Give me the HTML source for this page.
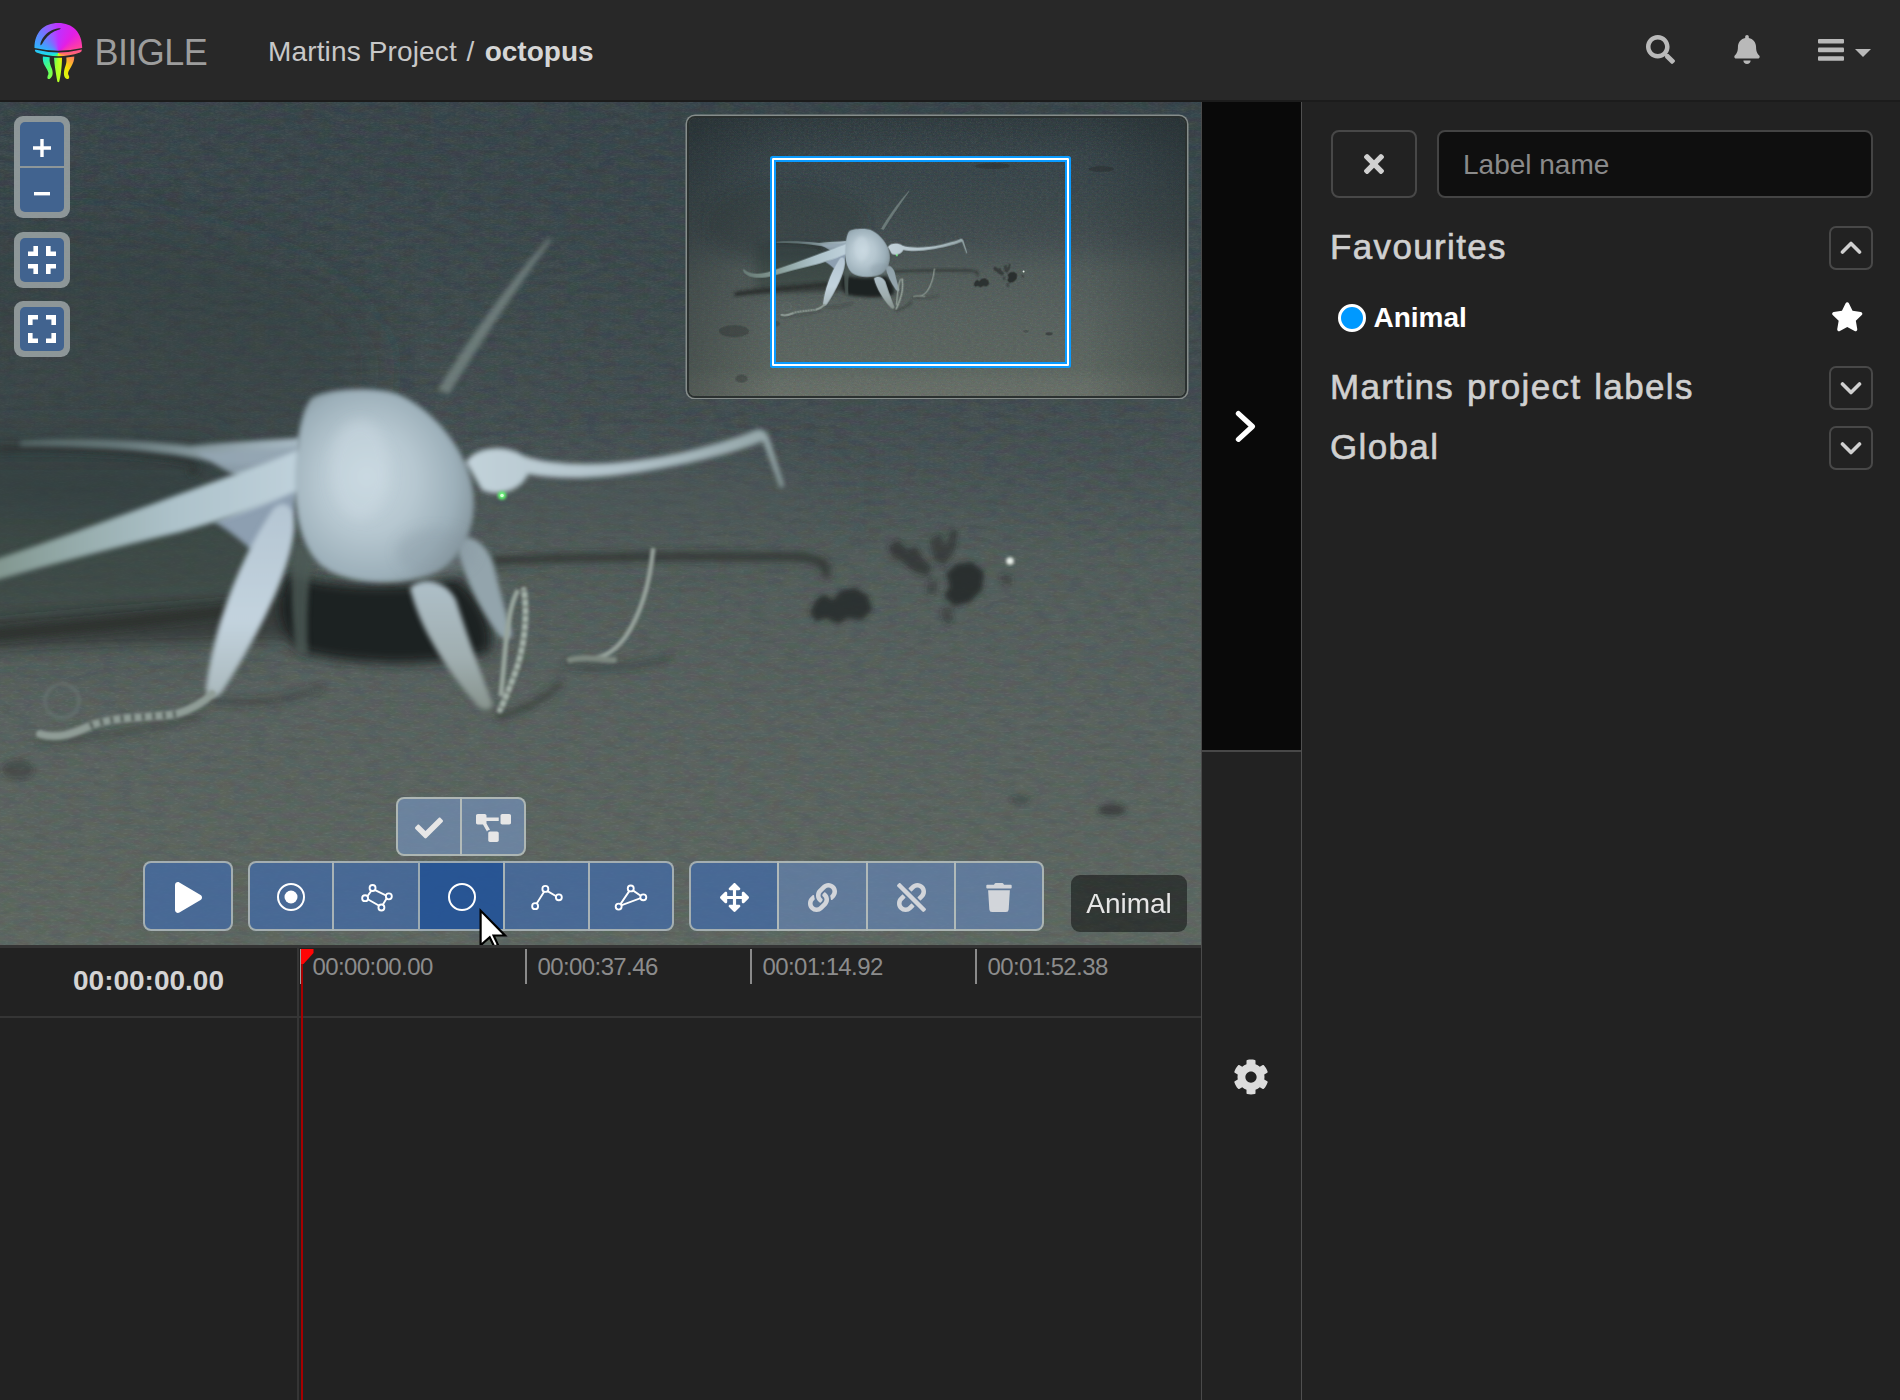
<!DOCTYPE html>
<html lang="en">
<head>
<meta charset="utf-8">
<title>octopus - BIIGLE</title>
<style>
*{box-sizing:border-box}
html,body{margin:0;padding:0}
body{width:1900px;height:1400px;overflow:hidden;background:#222;font-family:"Liberation Sans",Arial,sans-serif;color:#ccc;position:relative}
.abs{position:absolute}
#nav{left:0;top:0;width:1900px;height:102px;background:#282828;border-bottom:2px solid #1c1c1c}
#brand{left:94.500px;top:31px;font-size:36px;line-height:44px;color:#9d9d9d;letter-spacing:-.55px}
#crumb{left:268px;top:32px;font-size:28px;line-height:40px;color:#c8c8c8;white-space:nowrap}
#crumb b{font-weight:bold;color:#d6d6d6}
#video{left:0;top:102px;width:1202px;height:843px;overflow:hidden;background:#555f5c}
#timeline{left:0;top:945px;width:1202px;height:455px;background:#222;border-top:3px solid #343434;overflow:hidden}
#tabs{left:1201px;top:102px;width:101px;height:1298px;background:#222;border-left:1px solid #4a4a4a;border-right:1px solid #505050}
#tab1{left:0;top:0;width:99px;height:650px;background:#090909;border-bottom:2px solid #484848}
#side{left:1302px;top:102px;width:598px;height:1298px;background:#222}

#logo{left:34px;top:22px;width:50px;height:64px}
#logo .grad{position:absolute;left:0;top:0;width:50px;height:64px;background:conic-gradient(from 0deg at 24.300px 31px,#c030ff 0deg,#e41ee4 40deg,#ff40a0 75deg,#ff7068 98deg,#ffa838 125deg,#f4e400 152deg,#c4ff20 170deg,#a8ff28 186deg,#50ff70 212deg,#20ecc8 248deg,#20d4f0 268deg,#38a8ff 290deg,#7078ff 322deg,#a450ff 345deg,#c030ff 360deg);clip-path:path("M0.500 26 C0.500 10 10 0.900 24.300 0.900 C38.500 0.900 48.200 10 48.200 26 Q24.300 31.400 0.500 26Z M0.800 27.600 Q24.300 33.400 47.800 27.600 Q48.200 29.500 46 30.500 Q24.300 38 2.500 30.500 Q0.500 29.500 0.800 27.300Z M8.900 34.600 L15.700 35.200 C15 40 16.500 43 18 47 C19.500 52 18.500 55 15.500 57 C13 57.500 13 55 14.300 52.500 C15 50 13 47.500 11 44 C9 41 8.600 38 8.900 34.600Z M20 35.800 L28 35.800 C28 45 26.500 55 25.300 59.500 Q24.300 61 23.300 59.500 C22 52 20.500 44 20 35.800Z M32.300 35.500 L40.300 34.600 C40.300 38 39.500 41 37 45 C34.500 49 33.500 51 34.500 53 C36 55.500 35 57.500 33 57 C30 56 29.300 52 30.500 47 C31.500 43.500 33 41 32.300 35.500Z")}

.olc{position:absolute;background:rgba(160,168,170,.82);border-radius:9px;padding:6px}
.olc .b{display:block;width:44px;height:44px;background:#41638f;position:relative}
.olc .b svg{position:absolute}
#mini{left:686.500px;top:14px;width:500.500px;height:281.500px;border-radius:8px;border:2px solid #2b3130;overflow:hidden;background:#5a625a;box-shadow:0 0 0 1.500px #868d8b}
#ext{left:770.200px;top:54.100px;width:300.800px;height:212.100px;border:2.200px solid #0a9bff;border-radius:2.500px}
#ext i{position:absolute;left:0;top:0;right:0;bottom:0;border:2.300px solid #fff;border-radius:1px}
#ext b{position:absolute;left:0;top:0;right:0;bottom:0;border:2.200px solid #0a9bff}
.btn{position:absolute;height:70px;top:759px;border:2px solid rgba(200,202,188,.72);background:rgba(68,106,162,.8)}
.btn svg{position:absolute;left:50%;top:calc(50% + 1px)}
.btn.dis{background:rgba(98,130,176,.72)}
.btn.dis svg{opacity:.85}
.btn.act{background:rgba(36,84,152,.92)}
.btn.sm{height:59px;top:695px;background:rgba(114,142,180,.74)}
#lbl{left:1071px;top:773px;width:116px;height:57px;border-radius:9px;background:rgba(6,8,7,.5);color:#e6e6e6;font-size:28px;line-height:57px;text-align:center}

#tl-left{left:0;top:0;width:299px;height:452px;border-right:2px solid #353535}
#tl-head{left:0;top:0;width:1202px;height:70px;border-bottom:2px solid #353535}
#tl-time{left:0;top:13px;width:297px;text-align:center;font-size:28px;line-height:40px;font-weight:bold;color:#d4d4d4}
.tick{position:absolute;top:1px;height:35px;border-left:2px solid #8a8a8a;padding-left:10.500px;padding-top:6px;font-size:24px;letter-spacing:-.6px;line-height:24px;color:#8c8c8c;white-space:nowrap}
#cur{left:301px;top:2px;width:2px;height:452px;background:#a60000}
#flag{left:301px;top:1px;width:12.500px;height:15px;background:#ff0606;clip-path:polygon(0 0,100% 0,100% 4px,2.500px 100%,0 100%)}
#side h4{position:absolute;left:28px;margin:0;font-size:35px;line-height:40px;font-weight:normal;color:#d0d0d0;white-space:nowrap;letter-spacing:1.350px;-webkit-text-stroke:.6px #d0d0d0;word-spacing:1.700px}
.xbtn{position:absolute;border:2px solid #484848;border-radius:8px;background:#222}
.chev{position:absolute;left:527px;width:44px;height:44px;border:2px solid #484848;border-radius:7px}
.chev svg{position:absolute;left:9px;top:12px}
</style>
</head>
<body>
<div id="nav" class="abs">

  <div id="logo" class="abs"><div class="grad"></div>
    <svg class="abs" style="left:0;top:0" width="50" height="64" viewBox="0 0 50 64"><path d="M6.500 23.200 C5.800 21 9 14 14 10.500 C19 7 24.500 6 26.500 6.300 C27 6.800 26 7.300 24.500 7.800 C19 9.500 14 13 10.500 18 C8.500 21 7.500 23.500 6.500 23.200Z" fill="#282828"/></svg>
  </div>
  <svg class="abs" style="left:1646px;top:35px" width="29" height="29" viewBox="0 0 512 512"><path fill="#b9b9b9" d="M505 442.700L405.300 343c-4.500-4.500-10.600-7-17-7H372c27.600-35.300 44-79.700 44-128C416 93.100 322.900 0 208 0S0 93.100 0 208s93.100 208 208 208c48.300 0 92.700-16.400 128-44v16.300c0 6.400 2.500 12.500 7 17l99.700 99.700c9.400 9.400 24.600 9.400 33.900 0l28.300-28.300c9.400-9.400 9.400-24.600.1-34zM208 336c-70.700 0-128-57.200-128-128 0-70.700 57.200-128 128-128 70.700 0 128 57.200 128 128 0 70.700-57.200 128-128 128z"/></svg>
  <svg class="abs" style="left:1734px;top:35px" width="26" height="29" viewBox="0 0 448 512"><path fill="#b9b9b9" d="M224 512c35.320 0 63.970-28.650 63.970-64H160.030c0 35.350 28.650 64 63.970 64zm215.390-149.710c-19.320-20.760-55.470-51.990-55.470-154.290 0-77.700-54.480-139.900-127.940-155.160V32c0-17.670-14.320-32-31.980-32s-31.980 14.330-31.980 32v20.840C118.560 68.100 64.080 130.300 64.080 208c0 102.300-36.150 133.530-55.470 154.290-6 6.450-8.660 14.160-8.610 21.710.11 16.400 12.980 32 32.100 32h383.800c19.120 0 32-15.600 32.100-32 .05-7.550-2.610-15.270-8.610-21.710z"/></svg>
  <svg class="abs" style="left:1818px;top:38px" width="26" height="24" viewBox="0 0 26 24"><rect x="0" y="1" width="26" height="4.600" rx="1" fill="#b9b9b9"/><rect x="0" y="9.600" width="26" height="4.600" rx="1" fill="#b9b9b9"/><rect x="0" y="18.200" width="26" height="4.600" rx="1" fill="#b9b9b9"/></svg>
  <div class="abs" style="left:1855px;top:49px;width:0;height:0;border-left:8px solid transparent;border-right:8px solid transparent;border-top:8px solid #b9b9b9"></div>
  <div id="brand" class="abs">BIIGLE</div>
  <div id="crumb" class="abs"><span style="letter-spacing:.14px">Martins Project</span><span style="margin:0 2.500px 0 2px"> / </span><b>octopus</b></div>
</div>
<div id="video" class="abs">
<!--VIDEOSVG-->
<svg class="abs" style="left:0;top:0" width="1202" height="844" viewBox="0 102 1202 844">
<defs>
<linearGradient id="bg" gradientUnits="userSpaceOnUse" x1="0" y1="-65" x2="0" y2="1065">
<stop offset="0" stop-color="#2f3a3e"/><stop offset=".148" stop-color="#354146"/><stop offset=".235" stop-color="#374348"/><stop offset=".323" stop-color="#3a4649"/><stop offset=".411" stop-color="#3f4a4d"/><stop offset=".469" stop-color="#444f51"/><stop offset=".553" stop-color="#505a58"/><stop offset=".699" stop-color="#57605d"/><stop offset=".895" stop-color="#5c655f"/><stop offset=".945" stop-color="#646c65"/><stop offset="1" stop-color="#697067"/>
</linearGradient>
<radialGradient id="body" cx=".42" cy=".5" r=".6" fx=".4" fy=".45">
<stop offset="0" stop-color="#c6d6de"/><stop offset=".45" stop-color="#b6c7d0"/><stop offset=".8" stop-color="#9db0ba"/><stop offset="1" stop-color="#8798a0"/>
</radialGradient>
<linearGradient id="arm" gradientUnits="userSpaceOnUse" x1="300" y1="0" x2="-120" y2="0"><stop offset="0" stop-color="#bfd1db"/><stop offset=".3" stop-color="#adc2ca"/><stop offset=".55" stop-color="#94aaa9"/><stop offset=".72" stop-color="#829790"/><stop offset="1" stop-color="#6f847e"/></linearGradient>
<linearGradient id="arm2" gradientUnits="userSpaceOnUse" x1="300" y1="0" x2="0" y2="0"><stop offset="0" stop-color="#a9bbc6"/><stop offset=".3" stop-color="#8a9ca2"/><stop offset=".6" stop-color="#66787a"/><stop offset="1" stop-color="#536463"/></linearGradient>
<linearGradient id="leg" x1="0" y1="0" x2="0" y2="1"><stop offset="0" stop-color="#b4c5d2"/><stop offset=".6" stop-color="#c3d3de"/><stop offset="1" stop-color="#a9b8bc"/></linearGradient>
<linearGradient id="rleg" x1="0" y1="0" x2="0" y2="1"><stop offset="0" stop-color="#aebfc8"/><stop offset=".6" stop-color="#a0aeb0"/><stop offset="1" stop-color="#86928c"/></linearGradient>
<linearGradient id="rarm" x1="0" y1="0" x2="1" y2="0"><stop offset="0" stop-color="#c2d2da"/><stop offset=".5" stop-color="#b0c1c8"/><stop offset="1" stop-color="#92a4a6"/></linearGradient>
<filter id="b1" x="-20%" y="-20%" width="140%" height="140%"><feGaussianBlur stdDeviation="1.600"/></filter>
<filter id="b2" x="-20%" y="-20%" width="140%" height="140%"><feGaussianBlur stdDeviation="2.400"/></filter>
<filter id="b3" x="-20%" y="-20%" width="140%" height="140%"><feGaussianBlur stdDeviation="3.500"/></filter>
<filter id="b6" x="-30%" y="-30%" width="160%" height="160%"><feGaussianBlur stdDeviation="6"/></filter>
<filter id="b20" x="-50%" y="-50%" width="200%" height="200%"><feGaussianBlur stdDeviation="24"/></filter>
<filter id="gd" x="0" y="0" width="100%" height="100%"><feTurbulence type="fractalNoise" baseFrequency=".2 .55" numOctaves="2" seed="7"/><feColorMatrix type="matrix" values="0 0 0 0 .1  0 0 0 0 .12  0 0 0 0 .12  1.1 0 0 0 -.55"/></filter>
<filter id="gl" x="0" y="0" width="100%" height="100%"><feTurbulence type="fractalNoise" baseFrequency=".2 .55" numOctaves="2" seed="7"/><feColorMatrix type="matrix" values="0 0 0 0 .75  0 0 0 0 .82  0 0 0 0 .8  -1.1 0 0 0 .55"/></filter>
<filter id="gc" x="0" y="0" width="100%" height="100%"><feTurbulence type="fractalNoise" baseFrequency=".06 .16" numOctaves="2" seed="23"/><feColorMatrix type="matrix" values="2.2 0 0 0 -.86  0 2.2 0 0 -.8  0 0 2.2 0 -.8  0 0 0 0 .06"/></filter>
</defs>
<g id="scene">
<rect x="-340" y="-65" width="2010" height="1130" fill="url(#bg)"/>
<rect x="-340" y="-65" width="2010" height="1130" filter="url(#gd)" opacity="1"/><rect x="-340" y="-65" width="2010" height="1130" filter="url(#gl)" opacity=".17"/><rect x="-340" y="-65" width="2010" height="1130" filter="url(#gc)" opacity=".5"/>
<!-- soft large tonal areas -->
<g filter="url(#b20)">
<path d="M-60 440 L210 440 L300 540 L270 626 L-60 640Z" fill="#343f3e" opacity=".62"/>
<ellipse cx="60" cy="370" rx="320" ry="150" fill="#2a3438" opacity=".3"/>
<ellipse cx="640" cy="500" rx="200" ry="40" fill="#4d5958" opacity=".4"/>
</g>
<!-- shadows -->
<g filter="url(#b6)" fill="#1f2422">
<path d="M288 574 C330 588 410 590 456 578 C484 598 496 630 490 652 C440 668 350 666 302 652 C276 632 272 598 288 574Z"/>
<path d="M-150 640 C-60 622 80 612 230 600 L300 596 L300 640 C200 642 60 640 -150 660Z" opacity=".45"/>
</g>
<g filter="url(#b3)" fill="none" stroke="#2b302d" stroke-linecap="round">
<path d="M-140 652 C-40 634 120 626 236 610" stroke-width="10" opacity=".9"/>
<path d="M0 449 C70 447 150 452 186 460 C196 463 197 468 192 472" stroke-width="7" opacity=".7"/>
<path d="M494 561 C580 556 700 556 800 557 C822 559 828 566 826 574" stroke-width="8" opacity=".8"/>
<path d="M498 717 C520 712 545 700 560 684" stroke-width="6" opacity=".6"/>
<path d="M566 664 C590 670 640 668 668 658" stroke-width="6" opacity=".4"/>
<path d="M212 700 C250 706 290 700 320 688" stroke-width="8" opacity=".3"/>
<path d="M40 742 C90 738 150 730 200 716" stroke-width="6" opacity=".35"/>
</g>
<!-- dark debris -->
<g filter="url(#b2)" fill="#262928">
<path d="M810 612 L816 600 L824 594 L832 600 L842 590 L856 588 L868 596 L872 610 L862 620 L848 618 L838 624 L826 618 L816 622Z" opacity=".85"/>
<path d="M888 546 L898 540 L908 550 L916 546 L924 560 L932 566 L928 576 L914 572 L902 562 L892 556Z" opacity=".6"/>
<path d="M930 540 L940 534 L946 546 L952 528 L958 532 L954 552 L944 566 L934 560Z" opacity=".55"/>
<path d="M946 574 L956 564 L972 562 L984 572 L982 590 L970 602 L954 606 L944 596 L950 586Z" opacity=".88"/>
<path d="M940 610 L950 606 L954 620 L946 626Z M1000 574 L1012 576 L1012 584 L1002 584Z M928 582 L938 580 L936 594 L926 594Z" opacity=".4"/>
<ellipse cx="18" cy="770" rx="16" ry="10" opacity=".35"/>
<ellipse cx="1112" cy="810" rx="14" ry="6" opacity=".55"/>
<ellipse cx="1020" cy="800" rx="10" ry="5" opacity=".3"/>
<ellipse cx="-150" cy="800" rx="60" ry="24" opacity=".35"/>
<ellipse cx="-120" cy="990" rx="24" ry="16" opacity=".35"/>
<ellipse cx="885" cy="138" rx="70" ry="12" opacity=".4"/>
<ellipse cx="1322" cy="150" rx="50" ry="12" opacity=".4"/>
</g>
<!-- octopus back parts -->
<g filter="url(#b2)">
<path d="M438 390 C462 350 502 290 549 238 L551.500 240 C514 292 476 350 449 394Z" fill="#7b8b88" opacity=".75"/>
<path d="M294 546 C290 580 292 620 296 654 L308 654 C306 620 308 580 314 550Z" fill="#4d5a56" opacity=".8"/>
<path d="M20 441 C70 437 140 440 190 446 C230 442 270 440 300 438 L300 462 C270 466 230 468 196 458 C140 448 70 446 20 446Z" fill="url(#arm2)"/>
<path d="M196 452 C230 452 270 450 300 446 L296 500 C270 490 236 480 196 452Z" fill="#93a5b2" opacity=".9"/>
<path d="M296 484 L294 512 C282 530 268 544 252 550 C240 540 226 528 214 522Z" fill="#8d9fb1"/>
<path d="M456 540 C470 532 488 544 494 566 C500 592 506 614 512 632 C514 640 504 642 498 634 C478 606 462 574 456 540Z" fill="#93a4ac"/>
</g>
<!-- octopus front parts -->
<g filter="url(#b2)">
<path d="M298 450 C270 462 230 476 180 494 C120 516 60 538 0 558 C-40 572 -80 574 -104 556 C-112 548 -118 552 -112 562 C-96 586 -50 592 0 579 C60 562 120 546 180 532 C230 518 270 504 298 490Z" fill="url(#arm)"/>
<path d="M274 508 C286 498 296 508 294 530 C290 570 262 630 222 692 C216 700 206 698 206 688 C212 640 232 570 274 508Z" fill="url(#leg)"/>
<path d="M410 588 C422 576 446 580 456 600 C468 638 482 676 492 702 C494 710 484 712 478 706 C448 672 420 630 410 588Z" fill="url(#rleg)"/>
<path d="M466 462 C476 446 506 444 524 456 C560 468 620 466 680 453 C710 446 740 437 756 430 C764 428 768 433 770 441 L784 486 L780.500 488 L763 441 C742 450 704 461 652 470 C600 479 560 480 528 474 C522 490 498 498 482 490Z" fill="url(#rarm)"/>
<path d="M312 398 C326 388 384 385 404 397 C436 414 462 446 471 480 C480 516 468 552 440 570 C412 586 350 588 322 566 C298 546 292 500 296 460 C298 434 302 408 312 398Z" fill="url(#body)"/>
</g>
<g fill="none" stroke-linecap="round" filter="url(#b1)">
<path d="M524 590 C528 618 524 650 514 676 C508 692 504 702 500 710" stroke="#a3b0a8" stroke-width="6"/>
<path d="M524 590 C528 618 524 650 514 676 C508 692 504 702 500 710" stroke="#5a645c" stroke-width="6" stroke-dasharray="2 6" stroke-linecap="butt" opacity=".7"/>
<path d="M517 592 C506 614 506 650 501 694" stroke="#98a59d" stroke-width="5"/>
<path d="M653 550 C650 580 642 612 626 636 C616 650 606 656 596 658" stroke="#97a39c" stroke-width="4.500"/>
<path d="M570 660 C586 656 600 660 614 660" stroke="#7d8880" stroke-width="6" stroke-dasharray="3 3"/>
<circle cx="62" cy="701" r="17" stroke="#6f7d7a" stroke-width="4" opacity=".45"/>
<path d="M40 734 C60 740 76 732 90 726 C112 716 150 718 176 714 C190 710 204 702 212 694" stroke="#8f9c96" stroke-width="8"/>
<path d="M90 726 C112 716 150 718 176 714" stroke="#46504b" stroke-width="7" stroke-dasharray="3.500 7" stroke-linecap="butt" opacity=".8"/>
</g>
<g filter="url(#b6)"><ellipse cx="436" cy="552" rx="40" ry="24" fill="#8595a0" opacity=".3"/><ellipse cx="360" cy="470" rx="30" ry="50" fill="#d2e0e8" opacity=".35"/></g>
<circle cx="502" cy="495.500" r="4" fill="#62ff72" filter="url(#b1)"/>
<circle cx="502" cy="495.500" r="1.800" fill="#d8ffd8"/>
<circle cx="1010" cy="561" r="3.800" fill="#e6eee8" filter="url(#b1)"/>
</g>
</svg>
<!--/VIDEOSVG-->
<!--OVERLAY-->
<div class="olc" style="left:14px;top:14px"><span class="b" style="height:44px;border-radius:5px 5px 0 0"><svg style="left:13px;top:16.500px" width="18" height="18"><path d="M0 9H18M9 0V18" stroke="#fff" stroke-width="3.400"/></svg></span><span class="b" style="margin-top:2px;border-radius:0 0 5px 5px"><svg style="left:14px;top:24px" width="16" height="4"><rect width="16" height="3.400" fill="#fff"/></svg></span></div>
<div class="olc" style="left:14px;top:130px"><span class="b" style="border-radius:5px"><svg style="left:8px;top:8px" width="28" height="28" viewBox="0 0 28 28" fill="none" stroke="#fff" stroke-width="4"><path d="M0 7.700H7.700V0M28 7.700H20.300V0M0 20.300H7.700V28M28 20.300H20.300V28" stroke-width="4.600"/></svg></span></div>
<div class="olc" style="left:14px;top:199px"><span class="b" style="border-radius:5px"><svg style="left:8px;top:8px" width="28" height="28" viewBox="0 0 28 28" fill="none" stroke="#fff" stroke-width="4"><path d="M2.300 10V2.300H10M18 2.300H25.700V10M25.700 18V25.700H18M10 25.700H2.300V18" stroke-width="4.600"/></svg></span></div>
<div id="mini" class="abs"><svg class="abs" style="left:0;top:0" width="498" height="279" viewBox="-330.500 -54.250 1995.200 1117.800" preserveAspectRatio="none"><defs><linearGradient id="tint" x1="0" y1="0" x2="1" y2="0"><stop offset="0" stop-color="#20282a" stop-opacity=".32"/><stop offset=".18" stop-color="#20282a" stop-opacity="0"/><stop offset=".8" stop-color="#20282a" stop-opacity="0"/><stop offset="1" stop-color="#20282a" stop-opacity=".32"/></linearGradient><radialGradient id="vig" cx=".5" cy=".7" r=".9"><stop offset=".7" stop-color="#1c2426" stop-opacity="0"/><stop offset="1" stop-color="#1c2426" stop-opacity=".25"/></radialGradient></defs><use href="#scene"/><rect x="-340" y="-65" width="2010" height="1130" fill="url(#tint)"/><rect x="-340" y="-65" width="2010" height="1130" fill="url(#vig)"/></svg></div>
<div id="ext" class="abs"><i><b></b></i></div>
<div class="btn" style="left:143px;width:90px;border-radius:8px"><svg width="27" height="31" viewBox="0 0 448 512" style="margin-left:-13.5px;margin-top:-15.5px"><path fill="#fff" d="M424.400 214.700L72.400 6.600C43.800-10.300 0 6.100 0 47.900V464c0 37.500 40.700 60.100 72.400 41.300l352-208c31.400-18.500 31.500-64.100 0-82.600z"/></svg></div>
<div class="btn" style="left:247.5px;width:86.8px;border-radius:8px 0 0 8px"><svg width="36" height="36" viewBox="0 0 36 36" style="margin-left:-18.0px;margin-top:-18.0px" fill="none" stroke="#fff" stroke-width="2"><circle cx="18" cy="18" r="13"/><circle cx="18" cy="18" r="6.500" fill="#fff" stroke="none"/></svg></div>
<div class="btn" style="left:332.3px;width:88.0px;border-radius:0"><svg width="33.500" height="33.500" viewBox="0 0 36 36" style="margin-left:-16.750px;margin-top:-16px" fill="none" stroke="#fff" stroke-width="2"><path d="M13.500 8.500L30 16.500L23 28L6.500 18.500Z"/><g fill="#41679e"><circle cx="13.500" cy="7.500" r="3.200"/><circle cx="31" cy="16.500" r="3.200"/><circle cx="23" cy="28.500" r="3.200"/><circle cx="5.500" cy="18.500" r="3.200"/></g></svg></div>
<div class="btn act" style="left:418.3px;width:87.0px;border-radius:0"><svg width="36" height="36" viewBox="0 0 36 36" style="margin-left:-18.0px;margin-top:-18.0px" fill="none" stroke="#fff" stroke-width="2"><circle cx="18" cy="18" r="13"/></svg></div>
<div class="btn" style="left:503.3px;width:86.7px;border-radius:0"><svg width="33.500" height="33.500" viewBox="0 0 36 36" style="margin-left:-16.750px;margin-top:-16px" fill="none" stroke="#fff" stroke-width="2"><path d="M6 26L16.500 9.500L30 17.500"/><g fill="#41679e"><circle cx="5.500" cy="27" r="3.200"/><circle cx="16.500" cy="8.500" r="3.200"/><circle cx="31" cy="17.500" r="3.200"/></g></svg></div>
<div class="btn" style="left:588.0px;width:86.0px;border-radius:0 8px 8px 0"><svg width="33.500" height="33.500" viewBox="0 0 36 36" style="margin-left:-16.750px;margin-top:-16px" fill="none" stroke="#fff" stroke-width="2"><path d="M5.500 27L18 8.500L31 17.500Z"/><g fill="#41679e"><circle cx="5" cy="27.500" r="3.200"/><circle cx="18" cy="8" r="3.200"/><circle cx="31.500" cy="17.500" r="3.200"/></g></svg></div>
<div class="btn" style="left:689px;width:90px;border-radius:8px 0 0 8px"><svg width="29" height="29" viewBox="0 0 512 512" style="margin-left:-14.5px;margin-top:-14.5px"><path fill="#fff" d="M352.201 425.775l-79.196 79.196c-9.373 9.373-24.568 9.373-33.941 0l-79.196-79.196c-15.119-15.119-4.411-40.971 16.971-40.970h51.162L228 284H127.196v51.162c0 21.382-25.851 32.090-40.971 16.971L7.029 272.937c-9.373-9.373-9.373-24.569 0-33.941L86.225 159.800c15.119-15.119 40.971-4.411 40.971 16.971V228H228V127.196h-51.230c-21.382 0-32.090-25.851-16.971-40.971l79.196-79.196c9.373-9.373 24.568-9.373 33.941 0l79.196 79.196c15.119 15.119 4.411 40.971-16.971 40.971h-51.162V228h100.804v-51.162c0-21.382 25.851-32.090 40.970-16.971l79.196 79.196c9.373 9.373 9.373 24.569 0 33.941L425.773 352.200c-15.119 15.119-40.971 4.411-40.970-16.971V284H284v100.804h51.230c21.383 0 32.091 25.851 16.971 40.971z"/></svg></div>
<div class="btn dis" style="left:777px;width:91px;border-radius:0"><svg width="29" height="29" viewBox="0 0 512 512" style="margin-left:-14.5px;margin-top:-14.5px"><path fill="#e6e6e6" d="M326.612 185.391c59.747 59.809 58.927 155.698.360 214.590-.110.120-.240.250-.360.370l-67.200 67.200c-59.270 59.270-155.699 59.262-214.960 0-59.270-59.260-59.270-155.700 0-214.960l37.106-37.106c9.840-9.840 26.786-3.300 27.294 10.606.648 17.722 3.826 35.527 9.690 52.721 1.986 5.822.567 12.262-3.783 16.612l-13.087 13.087c-28.026 28.026-28.905 73.660-1.155 101.960 28.024 28.579 74.086 28.749 102.325.510l67.200-67.190c28.191-28.191 28.073-73.757 0-101.830-3.701-3.694-7.429-6.564-10.341-8.569a16.037 16.037 0 0 1-6.947-12.606c-.396-10.567 3.348-21.456 11.698-29.806l21.054-21.055c5.521-5.521 14.182-6.199 20.584-1.731a152.482 152.482 0 0 1 20.522 17.197zM467.547 44.449c-59.261-59.262-155.690-59.270-214.960 0l-67.200 67.200c-.120.120-.250.250-.360.370-58.566 58.892-59.387 154.781.360 214.590a152.454 152.454 0 0 0 20.521 17.196c6.402 4.468 15.064 3.789 20.584-1.731l21.054-21.055c8.350-8.350 12.094-19.239 11.698-29.806a16.037 16.037 0 0 0-6.947-12.606c-2.912-2.005-6.640-4.875-10.341-8.569-28.073-28.073-28.191-73.639 0-101.830l67.200-67.190c28.239-28.239 74.300-28.069 102.325.510 27.750 28.300 26.872 73.934-1.155 101.960l-13.087 13.087c-4.350 4.350-5.769 10.790-3.783 16.612 5.864 17.194 9.042 34.999 9.690 52.721.509 13.906 17.454 20.446 27.294 10.606l37.106-37.106c59.271-59.259 59.271-155.699.001-214.959z"/></svg></div>
<div class="btn dis" style="left:866px;width:90px;border-radius:0"><svg width="29" height="29" viewBox="0 0 512 512" style="margin-left:-14.500px;margin-top:-14.500px"><path fill="#e6e6e6" d="M304.083 405.907c4.686 4.686 4.686 12.284 0 16.971l-44.674 44.674c-59.263 59.262-155.693 59.266-214.961 0-59.264-59.265-59.264-155.696 0-214.960l44.675-44.675c4.686-4.686 12.284-4.686 16.971 0l39.598 39.598c4.686 4.686 4.686 12.284 0 16.971l-44.675 44.674c-28.072 28.073-28.072 73.750 0 101.823 28.072 28.072 73.750 28.073 101.824 0l44.674-44.674c4.686-4.686 12.284-4.686 16.971 0l39.597 39.598zm-56.568-260.216c4.686 4.686 12.284 4.686 16.971 0l44.674-44.674c28.072-28.075 73.750-28.073 101.824 0 28.072 28.073 28.072 73.750 0 101.823l-44.675 44.674c-4.686 4.686-4.686 12.284 0 16.971l39.598 39.598c4.686 4.686 12.284 4.686 16.971 0l44.675-44.675c59.265-59.265 59.265-155.695 0-214.960-59.266-59.264-155.695-59.264-214.961 0l-44.674 44.674c-4.686 4.686-4.686 12.284 0 16.971l39.597 39.598zm234.828 359.280l22.627-22.627c9.373-9.373 9.373-24.569 0-33.941L63.598 7.029c-9.373-9.373-24.569-9.373-33.941 0L7.029 29.657c-9.373 9.373-9.373 24.569 0 33.941l441.373 441.373c9.373 9.372 24.569 9.372 33.941 0z"/></svg></div>
<div class="btn dis" style="left:954px;width:89.500px;border-radius:0 8px 8px 0"><svg width="26" height="29" viewBox="0 0 448 512" style="margin-left:-13.0px;margin-top:-14.5px"><path fill="#e6e6e6" d="M432 32H312l-9.400-18.700A24 24 0 0 0 281.100 0H166.800a23.720 23.720 0 0 0-21.400 13.300L136 32H16A16 16 0 0 0 0 48v32a16 16 0 0 0 16 16h416a16 16 0 0 0 16-16V48a16 16 0 0 0-16-16zM53.200 467a48 48 0 0 0 47.900 45h245.800a48 48 0 0 0 47.900-45L416 128H32z"/></svg></div>
<div class="btn sm" style="left:396px;width:66px;border-radius:8px 0 0 8px"><svg width="28" height="28" viewBox="0 0 512 512" style="margin-left:-14.0px;margin-top:-14.0px"><path fill="#e6e6e6" d="M173.898 439.404l-166.400-166.400c-9.997-9.997-9.997-26.206 0-36.204l36.203-36.204c9.997-9.998 26.207-9.998 36.204 0L192 312.690 432.095 72.596c9.997-9.997 26.207-9.997 36.204 0l36.203 36.204c9.997 9.997 9.997 26.206 0 36.204l-294.400 294.401c-9.998 9.997-26.207 9.997-36.204-.001z"/></svg></div>
<div class="btn sm" style="left:460px;width:66px;border-radius:0 8px 8px 0"><svg width="35" height="28" viewBox="0 0 640 512" style="margin-left:-17.5px;margin-top:-14.0px"><path fill="#e6e6e6" d="M384 320H256c-17.670 0-32 14.330-32 32v128c0 17.670 14.330 32 32 32h128c17.670 0 32-14.330 32-32V352c0-17.670-14.330-32-32-32zM192 32c0-17.670-14.330-32-32-32H32C14.330 0 0 14.330 0 32v128c0 17.670 14.330 32 32 32h95.720l73.160 128.040C211.980 300.980 232.400 288 256 288h.280L192 175.510V128h224V64H192V32zM608 0H480c-17.670 0-32 14.330-32 32v128c0 17.670 14.330 32 32 32h128c17.670 0 32-14.330 32-32V32c0-17.670-14.330-32-32-32z"/></svg></div>
<div id="lbl" class="abs">Animal</div>
<svg class="abs" style="left:476px;top:804px" width="36" height="46" viewBox="476 906 36 46"><path d="M480.600 910.600V945.300L489.700 937.200L494.300 946.800L498 944.900L493.600 935.500H505Z" fill="#fff" stroke="#000" stroke-width="2.200" stroke-linejoin="miter"/></svg>
<!--/OVERLAY-->
</div>
<div id="timeline" class="abs"><div id="tl-head" class="abs"></div><div id="tl-left" class="abs"></div>
<div id="tl-time" class="abs">00:00:00.00</div>
<div class="tick" style="left:300px;border-left:1px solid #a0a0a0;padding-left:11.500px">00:00:00.00</div>
<div class="tick" style="left:525px">00:00:37.46</div>
<div class="tick" style="left:750px">00:01:14.92</div>
<div class="tick" style="left:975px">00:01:52.38</div>
<div id="cur" class="abs"></div><div id="flag" class="abs"></div>
</div>
<div id="tabs" class="abs"><div id="tab1" class="abs"><svg class="abs" style="left:28px;top:305px" width="30" height="40" viewBox="0 0 30 40"><path d="M8.400 6.600L22.400 19.500L8.400 32.300" fill="none" stroke="#fff" stroke-width="5.200" stroke-linecap="round" stroke-linejoin="round"/></svg></div>
<svg class="abs" style="left:31px;top:957px" width="36" height="36" viewBox="0 0 512 512"><path fill="#dcdcdc" d="M487.400 315.700l-42.600-24.600c4.300-23.200 4.300-47 0-70.200l42.600-24.600c4.900-2.800 7.100-8.600 5.500-14-11.100-35.600-30-67.800-54.700-94.600-3.800-4.100-10-5.100-14.800-2.300L380.800 110c-17.900-15.400-38.500-27.300-60.800-35.100V25.800c0-5.600-3.900-10.500-9.400-11.700-36.700-8.200-74.300-7.800-109.200 0-5.500 1.200-9.400 6.100-9.400 11.700V75c-22.200 7.900-42.800 19.800-60.800 35.100L88.700 85.500c-4.900-2.800-11-1.900-14.800 2.300-24.700 26.700-43.600 58.900-54.700 94.600-1.700 5.400.6 11.200 5.500 14L67.300 221c-4.300 23.200-4.300 47 0 70.200l-42.600 24.600c-4.900 2.800-7.100 8.600-5.500 14 11.100 35.600 30 67.800 54.700 94.600 3.800 4.100 10 5.100 14.800 2.300l42.600-24.600c17.900 15.400 38.500 27.300 60.800 35.100v49.200c0 5.600 3.900 10.500 9.400 11.700 36.700 8.200 74.300 7.800 109.200 0 5.500-1.200 9.400-6.100 9.400-11.700v-49.200c22.200-7.900 42.800-19.800 60.800-35.100l42.600 24.600c4.900 2.800 11 1.900 14.800-2.300 24.700-26.700 43.600-58.900 54.700-94.600 1.500-5.500-.7-11.300-5.600-14.100zM256 336c-44.100 0-80-35.900-80-80s35.900-80 80-80 80 35.900 80 80-35.900 80-80 80z"/></svg></div>
<div id="side" class="abs"><div class="xbtn" style="left:29px;top:28px;width:85.500px;height:68px"><svg class="abs" style="left:31px;top:17px" width="20" height="30" viewBox="0 0 352 512"><path fill="#d0d0d0" d="M242.720 256l100.070-100.070c12.280-12.280 12.280-32.190 0-44.480l-22.240-22.240c-12.280-12.280-32.190-12.280-44.480 0L176 189.280 75.930 89.210c-12.280-12.280-32.190-12.280-44.480 0L9.210 111.450c-12.280 12.280-12.280 32.190 0 44.480L109.280 256 9.210 356.070c-12.280 12.280-12.280 32.190 0 44.480l22.240 22.240c12.280 12.280 32.200 12.280 44.480 0L176 322.720l100.070 100.070c12.280 12.280 32.200 12.280 44.480 0l22.240-22.240c12.280-12.280 12.280-32.190 0-44.480L242.720 256z"/></svg></div>
<div class="xbtn" style="left:135px;top:28px;width:436px;height:68px;background:#0f0f0f;border-color:#444"><div class="abs" style="left:24px;top:13px;font-size:28px;line-height:40px;color:#8a8a8a">Label name</div></div>
<h4 style="top:125px">Favourites</h4><div class="chev" style="top:123.500px"><svg width="22" height="16" viewBox="0 0 22 16"><path d="M2.500 12L11 3.500L19.500 12" fill="none" stroke="#d0d0d0" stroke-width="3.600" stroke-linecap="round" stroke-linejoin="round"/></svg></div>
<div class="abs" style="left:35.500px;top:202px;width:28px;height:28px;border-radius:50%;background:#0099ff;border:3px solid #fff"></div>
<div class="abs" style="left:71.500px;top:196px;font-size:28px;line-height:40px;font-weight:bold;color:#fff">Animal</div>
<svg class="abs" style="left:529px;top:200px" width="32.500" height="29.500" viewBox="0 0 576 512"><path fill="#fff" d="M259.300 17.800L194 150.200 47.900 171.500c-26.200 3.800-36.700 36.100-17.700 54.600l105.700 103-25 145.500c-4.500 26.300 23.200 46 46.400 33.700L288 439.600l130.700 68.700c23.200 12.200 50.900-7.400 46.400-33.700l-25-145.500 105.700-103c19-18.500 8.500-50.800-17.700-54.600L382 150.200 316.700 17.800c-11.700-23.600-45.600-23.900-57.400 0z"/></svg>
<h4 style="top:265px">Martins project labels</h4><div class="chev" style="top:263.500px"><svg width="22" height="16" viewBox="0 0 22 16"><path d="M2.500 4L11 12.500L19.500 4" fill="none" stroke="#d0d0d0" stroke-width="3.600" stroke-linecap="round" stroke-linejoin="round"/></svg></div>
<h4 style="top:325px">Global</h4><div class="chev" style="top:323.500px"><svg width="22" height="16" viewBox="0 0 22 16"><path d="M2.500 4L11 12.500L19.500 4" fill="none" stroke="#d0d0d0" stroke-width="3.600" stroke-linecap="round" stroke-linejoin="round"/></svg></div>
</div>
</body>
</html>
